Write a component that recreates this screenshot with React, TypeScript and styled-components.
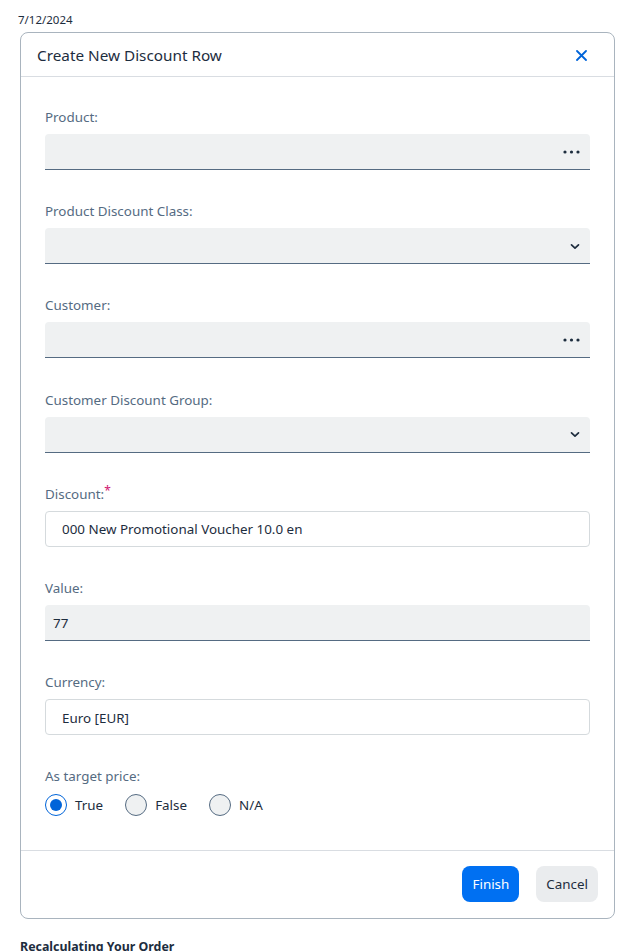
import React from "react";
import styled, { createGlobalStyle } from "styled-components";

const Global = createGlobalStyle`
  html, body { margin: 0; padding: 0; background: #fff; }
  body { font-family: "Noto Sans", "Open Sans", sans-serif; color: #1d2d3e; }
  * { box-sizing: border-box; }
`;

const Page = styled.div`
  padding: 12px 20px 0 18px;
  height: 951px;
  overflow: hidden;
`;

const DateText = styled.div`
  font-size: 11.5px;
  line-height: 16px;
  color: #1d2d3e;
  margin-bottom: 4px;
`;

const Dialog = styled.div`
  margin-left: 2px;
  width: 595px;
  border: 1px solid #a9b4be;
  border-radius: 8px;
  background: #fff;
`;

const Header = styled.div`
  height: 44px;
  display: flex;
  align-items: center;
  justify-content: space-between;
  padding: 1px 27px 0 16px;
  border-bottom: 1px solid #d9dde2;
`;

const Title = styled.div`
  font-size: 15.3px;
  color: #1d2d3e;
`;

const CloseBtn = styled.div`
  width: 12px;
  height: 12px;
  display: flex;
  align-items: center;
  justify-content: center;
  color: #0064d9;
`;

const Content = styled.div`
  padding: 30px 24px 34px 24px;
  display: flex;
  flex-direction: column;
  gap: 31.2px;
`;

const Field = styled.div`
  display: flex;
  flex-direction: column;
  gap: 7px;
`;

const Label = styled.div`
  font-size: 13.4px;
  line-height: 20px;
  color: #556b82;
`;

const Req = styled.span`
  color: #d0136f;
  vertical-align: top;
  font-size: 12px;
  line-height: 14px;
`;

const Input = styled.div<{ $variant: "grey" | "white" }>`
  height: 36px;
  display: flex;
  align-items: center;
  justify-content: space-between;
  font-size: 13.4px;
  color: #1d2d3e;
  border-radius: ${(p) => (p.$variant === "grey" ? "4px 4px 0 0" : "4px")};
  background: ${(p) => (p.$variant === "grey" ? "#eff1f2" : "#fff")};
  border: ${(p) => (p.$variant === "grey" ? "none" : "1px solid #d5dadd")};
  border-bottom: ${(p) =>
    p.$variant === "grey" ? "1px solid #556b82" : "1px solid #d5dadd"};
  padding: ${(p) => (p.$variant === "grey" ? "1px 10px 0 8px" : "1px 16px 0")};
`;

const Icon = styled.span`
  display: flex;
  align-items: center;
  color: #1d2d3e;
`;

const RadioRow = styled.div`
  display: flex;
  align-items: center;
  gap: 22px;
  margin-top: 1px;
`;

const RadioItem = styled.div`
  display: flex;
  align-items: center;
  gap: 8px;
  font-size: 13.4px;
  color: #1d2d3e;
`;

const Circle = styled.span<{ $on?: boolean }>`
  width: 22px;
  height: 22px;
  border-radius: 50%;
  border: 1px solid ${(p) => (p.$on ? "#0064d9" : "#556b82")};
  background: ${(p) => (p.$on ? "#fff" : "#eff1f2")};
  display: flex;
  align-items: center;
  justify-content: center;
  &::after {
    content: "";
    display: ${(p) => (p.$on ? "block" : "none")};
    width: 12px;
    height: 12px;
    border-radius: 50%;
    background: #0064d9;
  }
`;

const Footer = styled.div`
  border-top: 1px solid #d9dde2;
  padding: 15px 16px 16px;
  display: flex;
  justify-content: flex-end;
  gap: 17px;
`;

const Button = styled.button<{ $primary?: boolean }>`
  height: 36px;
  padding: 0 10px;
  border: none;
  border-radius: 8px;
  font-family: inherit;
  font-size: 13.4px;
  background: ${(p) => (p.$primary ? "#0070f2" : "#eaecee")};
  color: ${(p) => (p.$primary ? "#fff" : "#1d2d3e")};
`;

const Below = styled.div`
  margin-top: 19px;
  margin-left: 2px;
  font-size: 12.4px;
  font-weight: 700;
  color: #1d2d3e;
`;

const Dots = () => (
  <svg width="17" height="4" viewBox="0 0 17 4">
    <circle cx="2" cy="2" r="1.6" fill="#1d2d3e" />
    <circle cx="8.5" cy="2" r="1.6" fill="#1d2d3e" />
    <circle cx="15" cy="2" r="1.6" fill="#1d2d3e" />
  </svg>
);

const Chevron = () => (
  <svg width="10" height="7" viewBox="0 0 10 7">
    <path d="M1.5 1.8 L5 5.2 L8.5 1.8" fill="none" stroke="#1d2d3e" strokeWidth="1.7" strokeLinecap="round" strokeLinejoin="round" />
  </svg>
);

const fields: { label: string; variant: "grey" | "white"; value?: string; icon?: "dots" | "chev"; req?: boolean }[] = [
  { label: "Product:", variant: "grey", icon: "dots" },
  { label: "Product Discount Class:", variant: "grey", icon: "chev" },
  { label: "Customer:", variant: "grey", icon: "dots" },
  { label: "Customer Discount Group:", variant: "grey", icon: "chev" },
  { label: "Discount:", variant: "white", value: "000 New Promotional Voucher 10.0 en", req: true },
  { label: "Value:", variant: "grey", value: "77" },
  { label: "Currency:", variant: "white", value: "Euro [EUR]" },
];

export default function App() {
  return (
    <>
      <Global />
      <Page>
        <DateText>7/12/2024</DateText>
        <Dialog>
          <Header>
            <Title>Create New Discount Row</Title>
            <CloseBtn>
              <svg width="11" height="11" viewBox="0 0 11 11">
                <path d="M1 1 L10 10 M10 1 L1 10" stroke="#0064d9" strokeWidth="1.8" strokeLinecap="round" />
              </svg>
            </CloseBtn>
          </Header>
          <Content>
            {fields.map((f) => (
              <Field key={f.label}>
                <Label>
                  {f.label}
                  {f.req && <Req>*</Req>}
                </Label>
                <Input $variant={f.variant}>
                  <span>{f.value ?? ""}</span>
                  {f.icon && <Icon>{f.icon === "dots" ? <Dots /> : <Chevron />}</Icon>}
                </Input>
              </Field>
            ))}
            <Field>
              <Label>As target price:</Label>
              <RadioRow>
                <RadioItem>
                  <Circle $on />
                  True
                </RadioItem>
                <RadioItem>
                  <Circle />
                  False
                </RadioItem>
                <RadioItem>
                  <Circle />
                  N/A
                </RadioItem>
              </RadioRow>
            </Field>
          </Content>
          <Footer>
            <Button $primary>Finish</Button>
            <Button>Cancel</Button>
          </Footer>
        </Dialog>
        <Below>Recalculating Your Order</Below>
      </Page>
    </>
  );
}
